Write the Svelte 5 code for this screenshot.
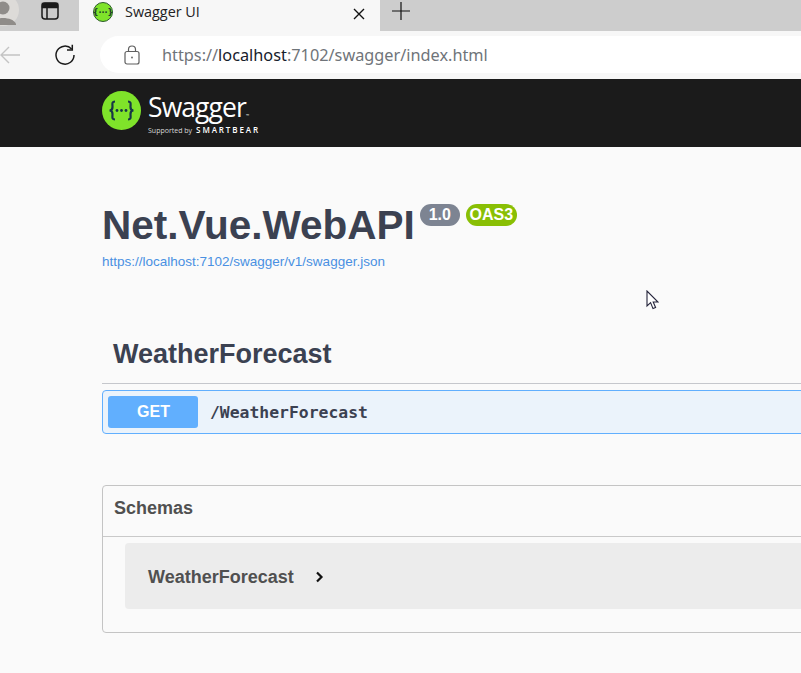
<script lang="ts">
  const url = { scheme: 'https://', host: 'localhost', rest: ':7102/swagger/index.html' };
</script>

<div class="window">
  <div class="tabstrip">
    <svg class="avatar" width="32" height="31" viewBox="0 0 32 31">
      <circle cx="16" cy="10" r="16" fill="#dddbd8" />
      <circle cx="16" cy="8" r="6.5" fill="#8f8c89" />
      <path d="M3 24 C6 16 26 16 29 24 L29 25 H3Z" fill="#8f8c89" />
    </svg>
    <svg class="tabs-icon" width="18" height="18" viewBox="0 0 18 18" fill="none" stroke="#1b1b1b" stroke-width="1.5">
      <rect x="1" y="1" width="16" height="16" rx="3" />
      <path d="M1 5.5 H17 M6 5.5 V17" />
      <path d="M1.5 1.5 H16.5 V5 H1.5Z" fill="#1b1b1b" />
    </svg>
    <div class="tab">
      <svg class="favicon" width="20" height="20" viewBox="0 0 20 20">
        <circle cx="10" cy="10" r="9.5" fill="#7fe32a" stroke="#2c5a2c" stroke-width="1" />
        <text x="10" y="13" text-anchor="middle" class="fav-text">{'{···}'}</text>
      </svg>
      <span class="tab-title">Swagger UI</span>
      <svg class="close" width="12" height="12" viewBox="0 0 12 12" stroke="#111" stroke-width="1.4">
        <path d="M1 1 L11 11 M11 1 L1 11" />
      </svg>
    </div>
    <svg class="plus" width="18" height="18" viewBox="0 0 18 18" stroke="#111" stroke-width="1.2">
      <path d="M0 9 H18 M9 0 V18" />
    </svg>
  </div>

  <div class="toolbar">
    <svg class="back" width="20" height="18" viewBox="0 0 20 18" fill="none" stroke="#c4c4c4" stroke-width="1.4">
      <path d="M1 9 H20 M9 1 L1 9 L9 17" />
    </svg>
    <svg class="reload" width="22" height="22" viewBox="0 0 22 22" fill="none" stroke="#1a1a1a" stroke-width="1.5">
      <path d="M17.6 5 A9 9 0 1 0 20 11" />
      <path d="M18.3 0.8 V6 H13" />
    </svg>
    <div class="address">
      <svg class="lock" width="16" height="20" viewBox="0 0 16 20" fill="none" stroke="#5f5f5f" stroke-width="1.2">
        <rect x="1" y="6.5" width="14" height="12.5" rx="2" />
        <path d="M4.5 6.5 V4.5 A3.5 3.5 0 0 1 11.5 4.5 V6.5" />
        <circle cx="8" cy="12.5" r="0.9" fill="#5f5f5f" stroke="none" />
      </svg>
      <span class="url">{url.scheme}<span class="host">{url.host}</span>{url.rest}</span>
    </div>
  </div>

  <header class="topbar">
    <svg class="logo" width="39" height="39" viewBox="0 0 39 39">
      <circle cx="19.5" cy="19.5" r="19.5" fill="#7fe32a" />
      <g fill="none" stroke="#173647" stroke-width="2.2">
        <path d="M13 10.5 C9.5 10.5 10.5 13 10.5 16 C10.5 18.5 9.5 19.5 7.5 19.5 C9.5 19.5 10.5 20.5 10.5 23 C10.5 26 9.5 28.5 13 28.5" />
        <path d="M26 10.5 C29.5 10.5 28.5 13 28.5 16 C28.5 18.5 29.5 19.5 31.5 19.5 C29.5 19.5 28.5 20.5 28.5 23 C28.5 26 29.5 28.5 26 28.5" />
      </g>
      <circle cx="15" cy="19.5" r="1.4" fill="#173647" />
      <circle cx="19.5" cy="19.5" r="1.4" fill="#173647" />
      <circle cx="24" cy="19.5" r="1.4" fill="#173647" />
    </svg>
    <div class="brand">
      <div class="brand-name">Swagger<span class="tm">™</span></div>
      <div class="brand-sub"><span class="by">Supported by</span> <span class="bear">SMARTBEAR</span></div>
    </div>
  </header>

  <main class="page">
    <section class="info">
      <div class="title-row">
        <h2>Net.Vue.WebAPI</h2>
        <span class="badge version">1.0</span>
        <span class="badge oas">OAS3</span>
      </div>
      <a class="spec-link" href="#spec">https://localhost:7102/swagger/v1/swagger.json</a>
    </section>

    <section class="tag-section">
      <h3>WeatherForecast</h3>
      <div class="opblock">
        <span class="method">GET</span>
        <span class="path">/WeatherForecast</span>
      </div>
    </section>

    <section class="schemas">
      <h4>Schemas</h4>
      <div class="schema-body">
        <div class="model">
          <span class="model-name">WeatherForecast</span>
          <svg width="9" height="12" viewBox="0 0 9 12" fill="none" stroke="#111" stroke-width="2.2">
            <path d="M2 1.5 L6.5 6 L2 10.5" />
          </svg>
        </div>
      </div>
    </section>
  </main>

  <svg class="cursor" width="13" height="20" viewBox="0 0 13 20">
    <path d="M1 1 V16 L4.6 12.6 L7 18.6 L9.6 17.5 L7.2 12 H12 Z" fill="#fff" stroke="#23233a" stroke-width="1.1" />
  </svg>
</div>

<style>
  :global(body) {
    margin: 0;
    background: #fafafa;
    overflow: hidden;
  }

  .window {
    position: relative;
    width: 801px;
    height: 673px;
    overflow: hidden;
    background: #fafafa;
    font-family: "Liberation Sans", Arial, sans-serif;
  }

  .tabstrip {
    display: flex;
    align-items: center;
    height: 31px;
    background: #cdcdcd;
  }

  .avatar {
    flex-shrink: 0;
    margin-left: -13px;
  }

  .tabs-icon {
    flex-shrink: 0;
    margin-left: 22px;
    margin-top: -10px;
  }

  .tab {
    display: flex;
    align-items: center;
    box-sizing: border-box;
    flex-shrink: 0;
    width: 301px;
    height: 31px;
    margin-left: 20px;
    padding: 0 14px 8px 14px;
    background: #f7f7f7;
  }

  .favicon {
    flex-shrink: 0;
  }

  .fav-text {
    font-family: "DejaVu Sans", sans-serif;
    font-size: 8px;
    font-weight: 700;
    fill: #1d3b2a;
  }

  .tab-title {
    margin-left: 12px;
    font-family: "Open Sans", sans-serif;
    font-size: 14.4px;
    color: #222;
  }

  .close {
    margin-left: auto;
    margin-right: 1px;
    margin-top: 5px;
  }

  .plus {
    flex-shrink: 0;
    margin-left: 12px;
    margin-top: -10px;
  }

  .toolbar {
    display: flex;
    align-items: center;
    height: 48px;
    background: #f7f7f7;
    box-sizing: border-box;
    padding-bottom: 1px;
  }

  .back {
    flex-shrink: 0;
  }

  .reload {
    flex-shrink: 0;
    margin-left: 34px;
  }

  .address {
    display: flex;
    align-items: center;
    flex: 1;
    height: 37px;
    margin-left: 24px;
    margin-right: -40px;
    padding-left: 24px;
    border-radius: 19px;
    background: #fff;
  }

  .lock {
    flex-shrink: 0;
  }

  .url {
    margin-left: 22px;
    font-family: "Noto Sans", sans-serif;
    font-size: 16.3px;
    color: #6f7479;
    white-space: nowrap;
  }

  .host {
    color: #16202b;
  }

  .topbar {
    display: flex;
    align-items: center;
    box-sizing: border-box;
    height: 68px;
    padding: 0 0 6px 102px;
    background: #1b1b1b;
  }

  .logo {
    flex-shrink: 0;
  }

  .brand {
    margin-left: 7px;
    margin-top: 9px;
    color: #fff;
  }

  .brand-name {
    height: 26px;
    font-family: "Open Sans", sans-serif;
    font-size: 26.5px;
    line-height: 26px;
    letter-spacing: -0.9px;
  }

  .tm {
    font-size: 4px;
  }

  .brand-sub {
    display: flex;
    align-items: baseline;
    gap: 4px;
    height: 10px;
    margin-top: 5px;
    line-height: 10px;
    font-family: "Open Sans", sans-serif;
    white-space: nowrap;
  }

  .by {
    font-size: 7px;
    color: #d8d8d8;
  }

  .bear {
    font-size: 8px;
    font-weight: 600;
    letter-spacing: 1.9px;
  }

  .page {
    width: 1000px;
    padding: 0 0 0 102px;
    color: #3b4151;
  }

  .info {
    padding-top: 56px;
  }

  .title-row {
    display: flex;
    align-items: flex-start;
    height: 45px;
  }

  h2 {
    margin: 0;
    font-size: 40.5px;
    line-height: 45px;
    font-weight: 700;
    color: #3b4151;
  }

  .badge {
    margin-top: 1px;
    height: 22px;
    line-height: 22px;
    border-radius: 11px;
    font-size: 16px;
    font-weight: 700;
    color: #fff;
    text-align: center;
  }

  .version {
    width: 40px;
    margin-left: 5px;
    background: #7d8492;
  }

  .oas {
    width: 51px;
    margin-left: 6px;
    background: #89bf04;
  }

  .spec-link {
    display: block;
    margin-top: 6px;
    font-size: 13.5px;
    line-height: 16px;
    color: #4990e2;
    text-decoration: none;
  }

  .tag-section {
    margin-top: 58px;
  }

  h3 {
    box-sizing: border-box;
    height: 56px;
    margin: 0;
    padding: 10px 0 0 11px;
    font-size: 27px;
    line-height: 32px;
    font-weight: 700;
    color: #3b4151;
    border-bottom: 1px solid #c5c7cc;
  }

  .opblock {
    display: flex;
    align-items: center;
    box-sizing: border-box;
    height: 44px;
    margin-top: 6px;
    padding: 0 5px;
    border: 1px solid #61affe;
    border-radius: 4px;
    background: #ebf3fb;
  }

  .method {
    width: 90px;
    height: 32px;
    padding-left: 1px;
    box-sizing: border-box;
    line-height: 31px;
    border-radius: 3px;
    background: #61affe;
    color: #fff;
    font-size: 16px;
    font-weight: 700;
    text-align: center;
  }

  .path {
    margin-left: 12px;
    font-family: "DejaVu Sans Mono", monospace;
    font-size: 16.4px;
    font-weight: 600;
    color: #3b4151;
  }

  .schemas {
    box-sizing: border-box;
    height: 148px;
    margin-top: 51px;
    border: 1px solid #c4c4c4;
    border-radius: 4px;
  }

  h4 {
    box-sizing: border-box;
    height: 51px;
    margin: 0;
    padding: 11px 0 0 11px;
    font-size: 18px;
    line-height: 22px;
    font-weight: 700;
    color: #505050;
    border-bottom: 1px solid #c9c9c9;
  }

  .schema-body {
    padding: 6px 22px 0;
  }

  .model {
    display: flex;
    align-items: center;
    gap: 21px;
    box-sizing: border-box;
    height: 66px;
    padding: 2px 0 0 23px;
    border-radius: 4px;
    background: #ececec;
  }

  .model-name {
    font-size: 18px;
    font-weight: 700;
    color: #505050;
  }

  .cursor {
    position: absolute;
    left: 646px;
    top: 290px;
  }
</style>
